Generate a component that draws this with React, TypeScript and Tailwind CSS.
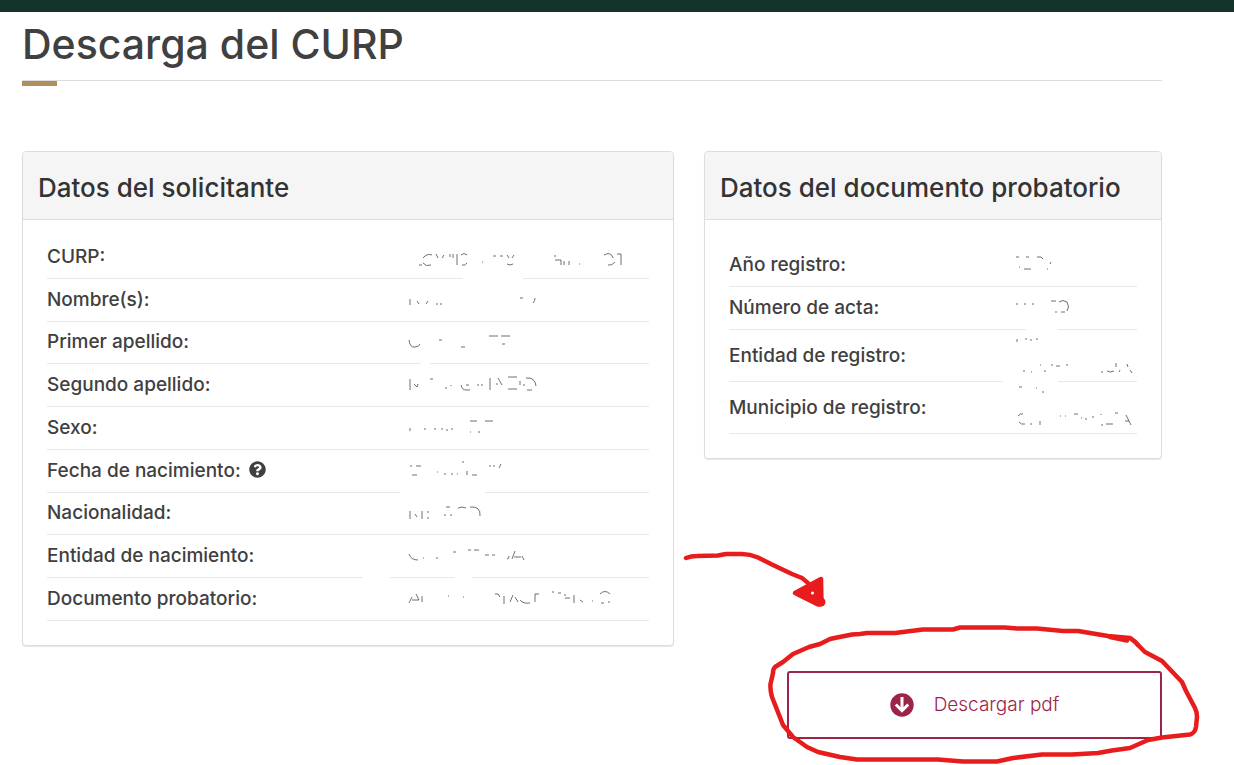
import { FaQuestionCircle } from "react-icons/fa";

interface Row {
  label: string;
  // leftover ink of a redacted value, drawn from the cell's top left corner
  ink: string;
  // part of the divider that the redaction wiped out
  wiped?: string;
  help?: boolean;
}

interface PanelProps {
  title: string;
  rows: Row[];
  bodyClass: string;
  tableClass: string;
  labelClass: string;
}

const applicantRows: Row[] = [
  {
    label: "CURP:",
    ink: "M11 29h3M15 22q4-5 9-3M15 27q3 4 8 2M28 18l2 4M34 22l2-3M42 21v-3M45 18v4M49 18v11M53 19q3-3 6 0M54 29q3 1 5-2M74 26h1M85 20h3M92 20h3M99 19l2 3M106 19l-2 3M99 28q3 2 6 0M147 19v2M147 24h6v5M156 25v4M161 25v4M171 28h1M196 19q7-4 9 3M200 29q4 1 7-3M209 18h4v11",
    wiped: "M55 42H115",
  },
  {
    label: "Nombre(s):",
    ink: "M2 20v6M9 22l2 3M18 25l2-3M28 25h2M32 25h2M112 19h3M125 24q2-2 2-5",
  },
  {
    label: "Primer apellido:",
    ink: "M1 18q1 8 6 7q4 0 5-3M31 18h3M53 25h4M81 14h9M93 14h9M94 22h3",
    wiped: "M13 41H22",
  },
  {
    label: "Segundo apellido:",
    ink: "M2 15v11M6 20l3 3l1-3M22 15h3M37 24h2M43 21v1M53 21q1 5 5 5h4M58 21h3M69 21h2M73 21h2M82 14v12M90 14l4 7M88 20h2M100 13h9M100 25h9M112 17v4M116 20v2M118 14q9-1 10 8M119 26h5",
  },
  {
    label: "Sexo:",
    ink: "M2 21v3M16 22h2M26 22h2M33 22h2M38 23h2M43 22h2M62 14h7M77 14h8M62 25h1M70 25h2",
  },
  {
    label: "Fecha de nacimiento:",
    help: true,
    ink: "M2 16h2M8 16h5M4 25h5M29 22h1M36 24h2M43 24h2M49 24h1M54 12h2M59 21v4M64 25h5M81 16h2M85 16h2M91 18l2-4",
    wiped: "M-8 41H77",
  },
  {
    label: "Nacionalidad:",
    ink: "M2 18v8M7 21l2 3M14 18v8M19 19h2M19 25h2M38 14h4M36 22h2M42 22h2M50 15q4-2 8 0M62 14q11-1 10 9",
  },
  {
    label: "Entidad de nacimiento:",
    ink: "M1 19q2 6 9 6M15 23h1M28 23h2M45 17h3M60 15h3M66 15h5M77 20h4M84 20h3M99 24q2 0 2-3M104 24l3-8M106 22h7M114 21l2 4",
    wiped: "M-45 42H-18M47 42H64",
  },
  {
    label: "Documento probatorio:",
    ink: "M1 25l3-6M4 22h7M8 16l3 6M14 18v6M40 18h1M55 19h1M87 16h3l2 3M96 18v8M102 24l3-7M107 19l3 5M112 22q3 4 10 3M127 24v-8h4M144 14h2M150 15h3M157 16v2M157 20h5M166 17v8M172 22l3 2M184 23h1M192 16q5-5 10 0M193 25h3M200 24h2",
  },
];

const documentRows: Row[] = [
  {
    label: "Año registro:",
    ink: "M1 13h3M11 13h3M22 13h4l2 2M4 23h1M9 25h7M35 20l1-2M32 25h1",
  },
  {
    label: "Número de acta:",
    ink: "M2 16v2M9 17h2M17 17h2M36 14h5M44 15q4-3 8 0q3 5 0 9M40 25h2M46 25h4",
    wiped: "M11 42H43",
  },
  {
    label: "Entidad de registro:",
    ink: "M2 9v3M10 9h2M15 10h2M21 9h2M25 35h1M36 35h2M41 36h4M51 35h2M8 41h2M16 42h1M29 41h2M87 41v2M92 41q3 2 7 0M101 33v4M104 42l1-2M112 34l1 3M115 40l2 3",
    wiped: "M-12 51H43",
  },
  {
    label: "Municipio de registro:",
    ink: "M4 5h3M21 6h1M27 10h2M3 34q2-3 5-2M4 40q2 3 6 2M15 42h2M25 39v4M45 34h1M50 34h1M59 32h4M66 36h1M70 37h2M77 35h2M86 32v1M86 43h2M91 42h7M100 31h3M110 39h4M111 33l5 10",
  },
];

function Panel({ title, rows, bodyClass, tableClass, labelClass }: PanelProps) {
  return (
    <section className="rounded-[4px] border border-[#dddddd] bg-white shadow-[0_1px_1px_rgba(0,0,0,0.1)]">
      <h2 className="rounded-t-[3px] border-b border-[#dddddd] bg-[#f5f5f5] px-[15px] pt-5 pb-4 text-[26px] leading-[31px] font-medium text-[#333333]">
        {title}
      </h2>
      <div className={bodyClass}>
        <table
          className={`w-full table-fixed border-separate border-spacing-0 ${tableClass}`}
        >
          <tbody>
            {rows.map((row) => (
              <tr key={row.label}>
                <th
                  scope="row"
                  className={`border-b border-[#e9e9e9] p-0 text-left align-middle text-[19px] leading-6 font-medium whitespace-nowrap text-[#404041] ${labelClass}`}
                >
                  {row.label}
                  {row.help && (
                    <FaQuestionCircle className="mb-1 ml-2 inline-block size-[17px]" />
                  )}
                </th>
                <td className="border-b border-[#e9e9e9] p-0 align-top">
                  <svg
                    className="block h-10 w-full overflow-visible"
                    fill="none"
                    role="img"
                    aria-label="Dato oculto"
                  >
                    {row.wiped && (
                      <path d={row.wiped} stroke="#fff" strokeWidth="5" />
                    )}
                    <path d={row.ink} stroke="#404041" strokeOpacity="0.75" />
                  </svg>
                </td>
              </tr>
            ))}
          </tbody>
        </table>
      </div>
    </section>
  );
}

// Hand-drawn arrow and ring that point at the download button
function Annotation() {
  return (
    <svg
      className="pointer-events-none absolute -top-[126px] -left-[107px] h-[220px] w-[525px]"
      viewBox="680 545 525 220"
      fill="none"
      stroke="#e81c1c"
      strokeWidth="4.5"
      strokeLinecap="round"
      strokeLinejoin="round"
      aria-hidden="true"
    >
      <path d="M686 558Q691 556 697 556L718 555.5L726 554H742Q750 554 758 557.5L773 565L792 574L802 578Q808 582 812 588" />
      <path d="M795 593L821 579L821.5 604L818 604.5Z" fill="#e81c1c" />
      <path d="M820 602h1" strokeWidth="9" />
      <circle cx="812.5" cy="593" r="1.5" fill="#fff" stroke="none" />
      <path d="M775 667L783 662L793 654L809 647L820 644L830 639L837 637.5L852 634.5L860 634L867 633H895L923 629.5H953L960 627.5H1005L1017 628.5H1037L1063 631H1078L1108 636L1130 638Q1135 641 1139 646L1145 652L1162 661L1182 682L1186 691L1195 708Q1197 712 1197 717L1196 727Q1195 733 1190 734.5L1162 737.5L1148 740L1130 748L1112 750.5L1098 753L1072 754.5H1042L1013 758L997 761.5H963L938 759.5H857L840 757L818 752L807 747L793 737L783 725L772 697Q770 690 770.5 684L773 673Q773 669 775 667Z" />
      <path d="M1110 637L1127 640.5" />
    </svg>
  );
}

export default function App() {
  return (
    <div className="bg-white font-['Inter',sans-serif]">
      <header className="h-3 bg-[#13322b]" />
      <main className="pr-[72px] pb-[26px] pl-[22px]">
        <h1 className="pt-2 pb-3 text-[41px] leading-[48px] font-medium text-[#404041]">
          Descarga del CURP
        </h1>
        <div className="border-t border-[#dddddd]">
          <div className="h-[5px] w-[35px] bg-[#b38e5d]" />
        </div>

        <div className="mt-[65px] grid grid-cols-[326fr_229fr] items-start gap-[30px]">
          <Panel
            title="Datos del solicitante"
            rows={applicantRows}
            bodyClass="px-6 pt-4 pb-6"
            tableClass="h-[385px]"
            labelClass="w-3/5"
          />
          <Panel
            title="Datos del documento probatorio"
            rows={documentRows}
            bodyClass="p-6 [&_tr]:h-[43px] [&_tr:nth-child(n+3)]:h-[52px]"
            tableClass=""
            labelClass="w-[70%]"
          />
        </div>

        <div className="mt-[25px] flex justify-end">
          <div className="relative w-[375px]">
            <button
              type="button"
              className="flex h-[68px] w-full items-center justify-center gap-5 rounded-[3px] border-2 border-[#9d2449] bg-white text-[19px] leading-6 font-light text-[#9d2449]"
            >
              <svg className="size-6" viewBox="0 0 24 24" aria-hidden="true">
                <circle cx="12" cy="12" r="11.7" fill="#9d2449" />
                <path
                  d="M12 4V17M5.8 11.5L12 17.7L18.2 11.5"
                  fill="none"
                  stroke="#fff"
                  strokeWidth="3"
                />
              </svg>
              Descargar pdf
            </button>
            <Annotation />
          </div>
        </div>
      </main>
    </div>
  );
}
